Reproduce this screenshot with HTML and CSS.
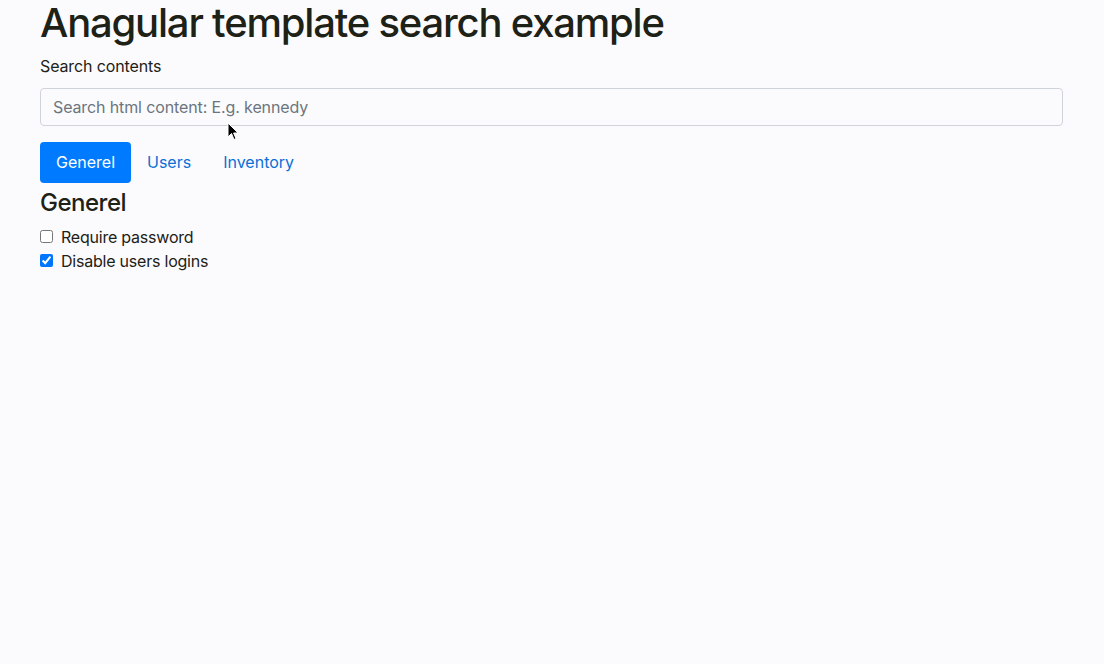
FILE: index.html
```html
<!DOCTYPE html>
<html>
<head>
<meta charset="utf-8">
<link rel="stylesheet" href="styles.css">
</head>
<body>
<div class="container">
  <h1 class="title">Anagular template search example</h1>
  <label class="label" for="search">Search contents</label>
  <div class="search-wrap">
    <input id="search" class="search" type="text" placeholder="Search html content: E.g. kennedy">
    <svg class="cursor" width="12" height="19" viewBox="0 0 12 19"><path d="M1 1 L1 15 L4.5 11.5 L7 17.5 L9 16.6 L6.6 11 L11 11 Z" fill="#000" stroke="#fff" stroke-width="1"/></svg>
  </div>
  <nav class="tabs">
    <a class="tab active">Generel</a>
    <a class="tab">Users</a>
    <a class="tab">Inventory</a>
  </nav>
  <h4 class="section">Generel</h4>
  <div class="check"><input type="checkbox" id="c1"><label for="c1">Require password</label></div>
  <div class="check"><input type="checkbox" id="c2" checked><label for="c2">Disable users logins</label></div>
</div>
</body>
</html>
```

FILE: styles.css
```css
html, body {
  margin: 0;
  background: #fbfbfe;
}
body {
  font-family: Inter, "Liberation Sans", Arial, sans-serif;
  font-size: 16px;
  line-height: 1.5;
  color: #1d2116;
}
.container {
  padding: 0 41px 0 40px;
}
.title {
  font-size: 40px;
  font-weight: 500;
  line-height: 1.2;
  letter-spacing: -1.2px;
  margin: -1px 0 7px;
}
.label {
  display: block;
  margin-bottom: 10px;
  letter-spacing: -0.12px;
}
.search-wrap {
  position: relative;
}
.search {
  box-sizing: border-box;
  display: block;
  width: 100%;
  height: 38px;
  padding: 6px 12px;
  font: inherit;
  letter-spacing: -0.12px;
  color: #495057;
  background: #fbfbfe;
  border: 1px solid #ced4da;
  border-radius: 4px;
  outline: none;
}
.search::placeholder {
  color: #6c757d;
}
.cursor {
  position: absolute;
  left: 187px;
  top: 34px;
}
.tabs {
  display: flex;
  margin-top: 16px;
}
.tab {
  display: block;
  padding: 8px 16px 9px;
  color: #0a6fd6;
  border-radius: 4px;
  cursor: pointer;
}
.tab.active {
  background: #007bff;
  color: #fff;
}
.section {
  font-size: 24px;
  font-weight: 500;
  line-height: 1.2;
  letter-spacing: -0.5px;
  margin: 6px 0 7px;
}
.check {
  display: flex;
  align-items: center;
  height: 24px;
  letter-spacing: -0.22px;
}
.check input {
  margin: 0 8px 0 0;
  width: 13px;
  height: 13px;
}
```
